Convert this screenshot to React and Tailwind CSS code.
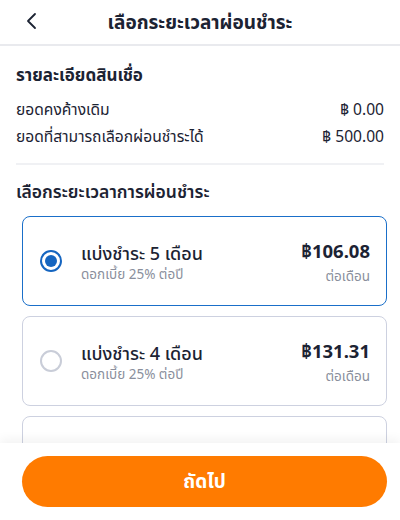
import React, { useState } from "react";

const plans = [
  { months: 5, rate: "25%", amount: "106.08" },
  { months: 4, rate: "25%", amount: "131.31" },
  { months: 3, rate: "25%", amount: "172.26" },
];

export default function App() {
  const [selected, setSelected] = useState(5);

  return (
    <div
      className="relative h-[520px] w-[400px] overflow-hidden bg-white text-[#1c2333]"
      style={{ fontFamily: '"Noto Sans", "Noto Sans Thai", "Liberation Sans", sans-serif' }}
    >
      {/* Header */}
      <div className="relative flex h-[46px] items-center justify-center border-b-2 border-[#e9eaee]">
        <button className="absolute left-[20px] top-[9px] flex h-[24px] w-[24px] items-center justify-center">
          <svg width="14" height="18" viewBox="0 0 14 18" fill="none">
            <path d="M10 2L3 9l7 7" stroke="#1c2333" strokeWidth="1.8" strokeLinecap="round" strokeLinejoin="round" />
          </svg>
        </button>
        <h1 className="text-[19px] font-bold leading-none">เลือกระยะเวลาผ่อนชำระ</h1>
      </div>

      {/* รายละเอียดสินเชื่อ */}
      <div className="mx-[16px] border-b-2 border-[#f0f1f4] pb-[14px] pt-[16px]">
        <h2 className="text-[17px] font-bold leading-[26px]">รายละเอียดสินเชื่อ</h2>
        <div className="mt-[8px] flex items-center justify-between text-[15.6px] leading-[26px]">
          <span>ยอดคงค้างเดิม</span>
          <span>฿ 0.00</span>
        </div>
        <div className="mt-[1px] flex items-center justify-between text-[15.6px] leading-[26px]">
          <span>ยอดที่สามารถเลือกผ่อนชำระได้</span>
          <span>฿ 500.00</span>
        </div>
      </div>

      {/* เลือกระยะเวลา */}
      <h2 className="mx-[16px] mt-[13px] text-[17.5px] font-semibold leading-[26px]">เลือกระยะเวลาการผ่อนชำระ</h2>

      <div className="ml-[22px] mr-[13px] mt-[12px] flex flex-col gap-[10px]">
        {plans.map((p) => {
          const active = selected === p.months;
          return (
            <button
              key={p.months}
              onClick={() => setSelected(p.months)}
              className={
                "flex h-[90px] items-center rounded-[8px] border-[1.5px] bg-white pl-[17px] pr-[16px] text-left " +
                (active ? "border-[#1a6fc9]" : "border-[#cdd1e0]")
              }
            >
              <span
                className={
                  "flex h-[22px] w-[22px] shrink-0 items-center justify-center rounded-full border-2 " +
                  (active ? "border-[#1565c0]" : "border-[#c9cdd8]")
                }
              >
                {active && <span className="h-[12px] w-[12px] rounded-full bg-[#1565c0]" />}
              </span>
              <span className="ml-[19px] flex flex-1 flex-col pt-[1px]">
                <span className="text-[18px] font-medium leading-[24px]">แบ่งชำระ {p.months} เดือน</span>
                <span className="text-[13.5px] leading-[18px] text-[#8a8f9c]">ดอกเบี้ย {p.rate} ต่อปี</span>
              </span>
              <span className="flex flex-col items-end pt-[2px]">
                <span className="text-[18.5px] font-bold leading-[24px]">฿{p.amount}</span>
                <span className="mt-[4px] text-[13.5px] leading-[18px] text-[#8a8f9c]">ต่อเดือน</span>
              </span>
            </button>
          );
        })}
      </div>

      {/* Bottom bar */}
      <div className="absolute bottom-0 left-0 right-0 h-[77px] bg-white pl-[22px] pr-[13px] pt-[13px] shadow-[0_-4px_10px_rgba(0,0,0,0.05)]">
        <button className="flex h-[51px] w-full items-center justify-center rounded-full bg-[#ff7b00] text-[19px] font-bold text-white">
          ถัดไป
        </button>
      </div>
    </div>
  );
}
